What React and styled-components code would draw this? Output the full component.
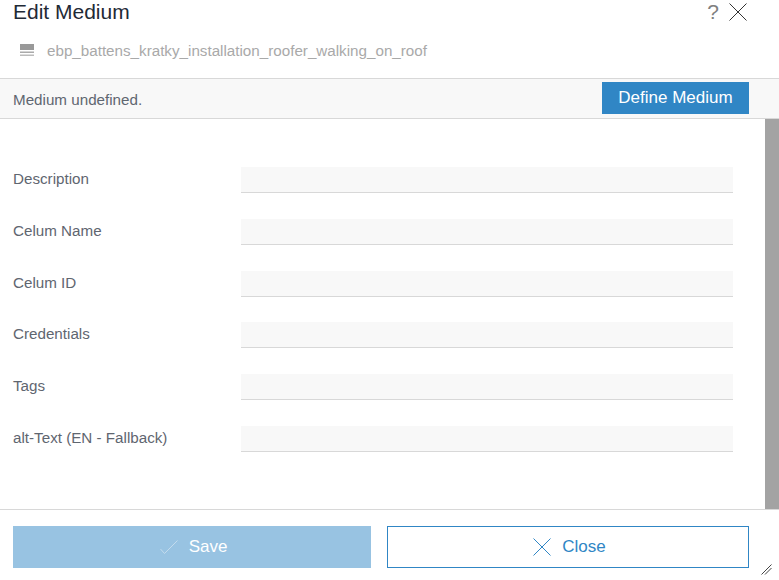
import React from "react";
import styled, { createGlobalStyle } from "styled-components";

const Global = createGlobalStyle`
  html, body { margin: 0; padding: 0; background: #fff; }
  body { font-family: "Liberation Sans", Arial, sans-serif; overflow: hidden; }
`;

const Dialog = styled.div`
  width: 779px;
  height: 580px;
  display: flex;
  flex-direction: column;
  position: relative;
  overflow: hidden;
  background: #fff;
`;

const Header = styled.header`
  height: 78px;
  flex: none;
  padding: 0 32px 0 13px;
  display: flex;
  flex-direction: column;
  box-sizing: border-box;
`;

const TitleRow = styled.div`
  display: flex;
  justify-content: space-between;
  align-items: center;
  height: 24px;
`;

const Title = styled.h1`
  margin: 0;
  font-size: 21px;
  font-weight: 400;
  color: #1f2a36;
  line-height: 24px;
`;

const HeaderActions = styled.div`
  display: flex;
  align-items: center;
  gap: 10px;
`;

const Help = styled.span`
  font-size: 21px;
  color: #808080;
  line-height: 24px;
`;

const FileRow = styled.div`
  display: flex;
  align-items: center;
  gap: 13px;
  margin: 17px 0 0 7px;
  height: 18px;
`;

const FileName = styled.span`
  font-size: 15.2px;
  color: #a9a9a9;
`;

const Bar = styled.div`
  height: 41px;
  flex: none;
  box-sizing: border-box;
  background: #f8f8f8;
  border-top: 1px solid #d8d8d8;
  border-bottom: 1px solid #d8d8d8;
  padding: 3px 30px 0 13px;
  display: flex;
  justify-content: space-between;
  align-items: flex-start;
`;

const Status = styled.span`
  font-size: 15.2px;
  color: #5f6670;
  line-height: 35px;
`;

const DefineButton = styled.button`
  width: 147px;
  height: 32px;
  border: 0;
  background: #3086c5;
  color: #fff;
  font: 400 17px "Liberation Sans", Arial, sans-serif;
  padding: 0;
`;

const Body = styled.div`
  flex: 1;
  display: flex;
  min-height: 0;
`;

const Form = styled.div`
  flex: 1;
  padding: 48px 32px 0 13px;
`;

const Row = styled.div`
  height: 51.8px;
  display: grid;
  grid-template-columns: 228px 1fr;
  align-items: start;
`;

const Label = styled.label`
  font-size: 15.2px;
  color: #5f6670;
  line-height: 24px;
`;

const Field = styled.div`
  height: 26px;
  box-sizing: border-box;
  background: #f8f8f8;
  border-bottom: 1px solid #d8d8d8;
`;

const Scrollbar = styled.div`
  width: 14px;
  flex: none;
  background: #a3a3a3;
`;

const Footer = styled.footer`
  height: 71px;
  flex: none;
  box-sizing: border-box;
  border-top: 1px solid #d8d8d8;
  padding: 16px 30px 0 13px;
  display: grid;
  grid-template-columns: 358px 362px;
  column-gap: 16px;
  align-items: start;
`;

const ActionButton = styled.button`
  height: 42px;
  box-sizing: border-box;
  display: flex;
  align-items: center;
  justify-content: center;
  gap: 11px;
  padding: 0 0 0 3px;
  font: 400 17px "Liberation Sans", Arial, sans-serif;
  color: ${(p) => (p.$primary ? "#fff" : "#3086c5")};
  background: ${(p) => (p.$primary ? "#98c3e2" : "#fff")};
  border: ${(p) => (p.$primary ? "0" : "1px solid #3086c5")};
`;

const Grip = styled.svg`
  position: absolute;
  right: 7px;
  bottom: 5px;
`;

const Cross = ({ size, color }) => (
  <svg width={size} height={size} viewBox="0 0 18 18">
    <path d="M0.5 0.5 L17.5 17.5 M17.5 0.5 L0.5 17.5" stroke={color} strokeWidth="1" fill="none" />
  </svg>
);

const fields = ["Description", "Celum Name", "Celum ID", "Credentials", "Tags", "alt-Text (EN - Fallback)"];

export default function App() {
  return (
    <Dialog>
      <Global />
      <Header>
        <TitleRow>
          <Title>Edit Medium</Title>
          <HeaderActions>
            <Help>?</Help>
            <Cross size={18} color="#333" />
          </HeaderActions>
        </TitleRow>
        <FileRow>
          <svg width="14" height="14" viewBox="0 0 14 14">
            <rect x="0" y="1" width="14" height="6" fill="#999" />
            <rect x="0" y="8.5" width="14" height="1.5" fill="#aaa" />
            <rect x="0" y="11.5" width="14" height="1.5" fill="#bbb" />
          </svg>
          <FileName>ebp_battens_kratky_installation_roofer_walking_on_roof</FileName>
        </FileRow>
      </Header>
      <Bar>
        <Status>Medium undefined.</Status>
        <DefineButton>Define Medium</DefineButton>
      </Bar>
      <Body>
        <Form>
          {fields.map((f) => (
            <Row key={f}>
              <Label>{f}</Label>
              <Field />
            </Row>
          ))}
        </Form>
        <Scrollbar />
      </Body>
      <Footer>
        <ActionButton $primary>
          <svg width="18" height="14" viewBox="0 0 18 14">
            <path d="M0.5 9 L4.5 13.5 L17.5 0.5" stroke="#c3dbed" strokeWidth="1" fill="none" />
          </svg>
          Save
        </ActionButton>
        <ActionButton>
          <Cross size={18} color="#3086c5" />
          Close
        </ActionButton>
      </Footer>
      <Grip width="11" height="11" viewBox="0 0 11 11">
        <path d="M0.5 10.5 L10.5 0.5 M4 10.5 L10.5 4" stroke="#444" strokeWidth="1" fill="none" />
      </Grip>
    </Dialog>
  );
}
